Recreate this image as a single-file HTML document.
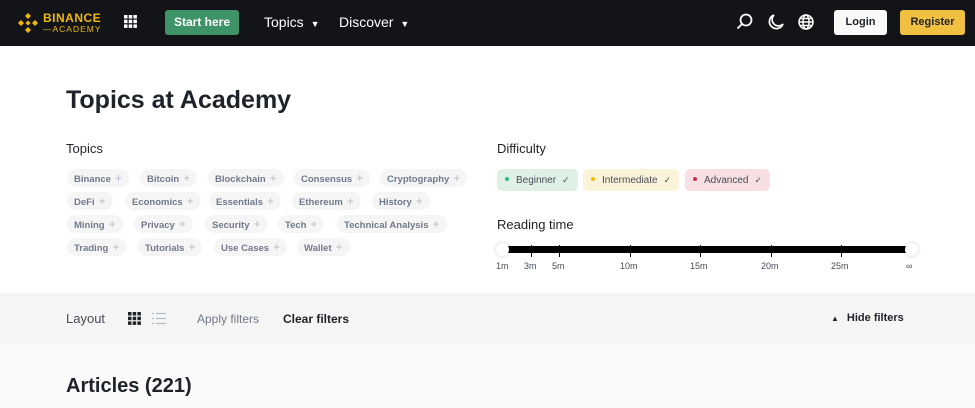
<!DOCTYPE html>
<html><head><meta charset="utf-8"><style>
*{box-sizing:border-box;margin:0;padding:0}
body{width:975px;height:408px;overflow:hidden;font-family:"Liberation Sans",sans-serif;background:#fff;position:relative;color:#1e2329}
.hdr{position:absolute;left:0;top:0;width:975px;height:46px;background:#121418}
.abs{position:absolute}
.tag{position:absolute;height:18px;background:#f5f5f5;border-radius:9px;font-size:9.5px;font-weight:bold;color:#707a8a;line-height:18px;padding:0 7px;white-space:nowrap}
.tag span{font-weight:normal;color:#b7bdc6;font-size:12px;margin-left:4px}
.diff{position:absolute;top:169px;height:22px;border-radius:5px;font-size:10px;color:#474d57;line-height:22px;padding:0 8px;white-space:nowrap}
.diff i{display:inline-block;width:4px;height:4px;border-radius:2px;margin-right:7px;vertical-align:middle;position:relative;top:-1px}
.diff b{font-weight:normal;margin-left:6px;font-size:9px}
.tick{position:absolute;top:245px;width:1px;height:12px;background:#000}
.lbl{position:absolute;top:261px;font-size:9px;color:#474d57}
</style></head><body>
<div class="hdr">
 <svg class="abs" style="left:16px;top:11px" width="24" height="24" viewBox="0 0 24 24"><g fill="#f0b90b"><path d="M12 2l3 3-3 3-3-3z"/><path d="M5 9l3 3-3 3-3-3z"/><path d="M19 9l3 3-3 3-3-3z"/><path d="M12 16l3 3-3 3-3-3z"/><path d="M12 9.5l2.5 2.5-2.5 2.5-2.5-2.5z"/></g></svg>
 <div class="abs" style="left:43px;top:11px;color:#f0b90b;font-weight:bold;font-size:12px;letter-spacing:.5px">BINANCE</div>
 <div class="abs" style="left:43px;top:24px;color:#f0b90b;font-size:8.5px;letter-spacing:1px">—ACADEMY</div>
 <svg class="abs" style="left:124px;top:15px" width="13" height="13"><g fill="#fff"><rect x="0" y="0" width="3.5" height="3.5"/><rect x="4.7" y="0" width="3.5" height="3.5"/><rect x="9.4" y="0" width="3.5" height="3.5"/><rect x="0" y="4.7" width="3.5" height="3.5"/><rect x="4.7" y="4.7" width="3.5" height="3.5"/><rect x="9.4" y="4.7" width="3.5" height="3.5"/><rect x="0" y="9.4" width="3.5" height="3.5"/><rect x="4.7" y="9.4" width="3.5" height="3.5"/><rect x="9.4" y="9.4" width="3.5" height="3.5"/></g></svg>
 <div class="abs" style="left:165px;top:10px;width:74px;height:25px;background:#3f9467;border-radius:3px;color:#fff;font-size:12px;font-weight:bold;text-align:center;line-height:25px">Start here</div>
 <div class="abs" style="left:264px;top:14px;color:#fff;font-size:14px">Topics <span style="font-size:9px;margin-left:3px">▼</span></div>
 <div class="abs" style="left:339px;top:14px;color:#fff;font-size:14px">Discover <span style="font-size:9px;margin-left:3px">▼</span></div>
 <svg class="abs" style="left:736px;top:13px" width="18" height="18" viewBox="0 0 18 18"><circle cx="10" cy="7" r="5.5" fill="none" stroke="#fff" stroke-width="1.8"/><path d="M6 11l-4.5 4.5" stroke="#fff" stroke-width="1.8"/></svg>
 <svg class="abs" style="left:767px;top:13px" width="18" height="18" viewBox="0 0 18 18"><path d="M7 2a7 7 0 1 0 9 9a6 6 0 0 1-9-9z" fill="none" stroke="#fff" stroke-width="1.7"/></svg>
 <svg class="abs" style="left:797px;top:13px" width="18" height="18" viewBox="0 0 18 18"><g fill="none" stroke="#fff" stroke-width="1.5"><circle cx="9" cy="9" r="7"/><ellipse cx="9" cy="9" rx="3" ry="7"/><path d="M2 9h14M3 5.5h12M3 12.5h12"/></g></svg>
 <div class="abs" style="left:834px;top:10px;width:53px;height:25px;background:#fafafa;border-radius:3px;font-size:11px;font-weight:bold;text-align:center;line-height:25px;color:#1e2329">Login</div>
 <div class="abs" style="left:900px;top:10px;width:65px;height:25px;background:#f0c040;border-radius:3px;font-size:11px;font-weight:bold;text-align:center;line-height:25px;color:#1e2329">Register</div>
</div>
<div class="abs" style="left:66px;top:86px;font-size:25px;font-weight:bold">Topics at Academy</div>
<div class="abs" style="left:66px;top:141px;font-size:13px;color:#1e2329">Topics</div>
<div class="abs" style="left:497px;top:141px;font-size:13px">Difficulty</div>
<div class="abs" style="left:497px;top:217px;font-size:13px">Reading time</div>

<div class="tag" style="left:67px;top:169px">Binance<span>+</span></div>
<div class="tag" style="left:140px;top:169px">Bitcoin<span>+</span></div>
<div class="tag" style="left:208px;top:169px">Blockchain<span>+</span></div>
<div class="tag" style="left:294px;top:169px">Consensus<span>+</span></div>
<div class="tag" style="left:380px;top:169px">Cryptography<span>+</span></div>
<div class="tag" style="left:67px;top:192px">DeFi<span>+</span></div>
<div class="tag" style="left:125px;top:192px">Economics<span>+</span></div>
<div class="tag" style="left:209px;top:192px">Essentials<span>+</span></div>
<div class="tag" style="left:292px;top:192px">Ethereum<span>+</span></div>
<div class="tag" style="left:372px;top:192px">History<span>+</span></div>
<div class="tag" style="left:67px;top:215px">Mining<span>+</span></div>
<div class="tag" style="left:134px;top:215px">Privacy<span>+</span></div>
<div class="tag" style="left:205px;top:215px">Security<span>+</span></div>
<div class="tag" style="left:278px;top:215px">Tech<span>+</span></div>
<div class="tag" style="left:337px;top:215px">Technical Analysis<span>+</span></div>
<div class="tag" style="left:67px;top:238px">Trading<span>+</span></div>
<div class="tag" style="left:138px;top:238px">Tutorials<span>+</span></div>
<div class="tag" style="left:214px;top:238px">Use Cases<span>+</span></div>
<div class="tag" style="left:297px;top:238px">Wallet<span>+</span></div>

<div class="diff" style="left:497px;background:#dff1e7"><i style="background:#2ebd85"></i>Beginner<b>✓</b></div>
<div class="diff" style="left:583px;background:#fbf3d9"><i style="background:#f0b90b"></i>Intermediate<b>✓</b></div>
<div class="diff" style="left:685px;background:#f8dfe1"><i style="background:#cf304a"></i>Advanced<b>✓</b></div>

<div class="abs" style="left:502px;top:246px;width:410px;height:7px;background:#000"></div>
<div class="tick" style="left:531px"></div><div class="tick" style="left:559px"></div><div class="tick" style="left:630px"></div><div class="tick" style="left:700px"></div><div class="tick" style="left:771px"></div><div class="tick" style="left:841px"></div>
<div class="abs" style="left:496px;top:243px;width:13px;height:13px;border-radius:7px;background:#fff;box-shadow:0 0 4px rgba(0,0,0,.2)"></div>
<div class="abs" style="left:905px;top:243px;width:13px;height:13px;border-radius:7px;background:#fff;box-shadow:0 0 4px rgba(0,0,0,.2)"></div>
<div class="lbl" style="left:496px">1m</div><div class="lbl" style="left:524px">3m</div><div class="lbl" style="left:552px">5m</div><div class="lbl" style="left:620px">10m</div><div class="lbl" style="left:690px">15m</div><div class="lbl" style="left:761px">20m</div><div class="lbl" style="left:831px">25m</div><div class="lbl" style="left:906px">∞</div>

<div class="abs" style="left:0;top:293px;width:975px;height:50px;background:#f5f5f5"></div>
<div class="abs" style="left:66px;top:311px;font-size:13px;color:#474d57">Layout</div>
<svg class="abs" style="left:128px;top:312px" width="13" height="13"><g fill="#1e2329"><rect x="0" y="0" width="3.5" height="3.5"/><rect x="4.7" y="0" width="3.5" height="3.5"/><rect x="9.4" y="0" width="3.5" height="3.5"/><rect x="0" y="4.7" width="3.5" height="3.5"/><rect x="4.7" y="4.7" width="3.5" height="3.5"/><rect x="9.4" y="4.7" width="3.5" height="3.5"/><rect x="0" y="9.4" width="3.5" height="3.5"/><rect x="4.7" y="9.4" width="3.5" height="3.5"/><rect x="9.4" y="9.4" width="3.5" height="3.5"/></g></svg>
<svg class="abs" style="left:152px;top:312px" width="14" height="13"><g stroke="#b7bdc6" stroke-width="1.2"><path d="M0 1.5h2M4 1.5h10M0 6.5h2M4 6.5h10M0 11.5h2M4 11.5h10"/></g></svg>
<div class="abs" style="left:197px;top:312px;font-size:12px;color:#707a8a">Apply filters</div>
<div class="abs" style="left:283px;top:312px;font-size:12px;font-weight:bold;color:#1e2329">Clear filters</div>
<div class="abs" style="left:831px;top:312px;font-size:11px;font-weight:bold;color:#1e2329"><span style="font-size:8px;margin-right:8px">▲</span>Hide filters</div>
<div class="abs" style="left:0;top:343px;width:975px;height:65px;background:#fafafa"></div>
<div class="abs" style="left:66px;top:375px;font-size:20px;font-weight:bold">Articles (221)</div>
</body></html>
